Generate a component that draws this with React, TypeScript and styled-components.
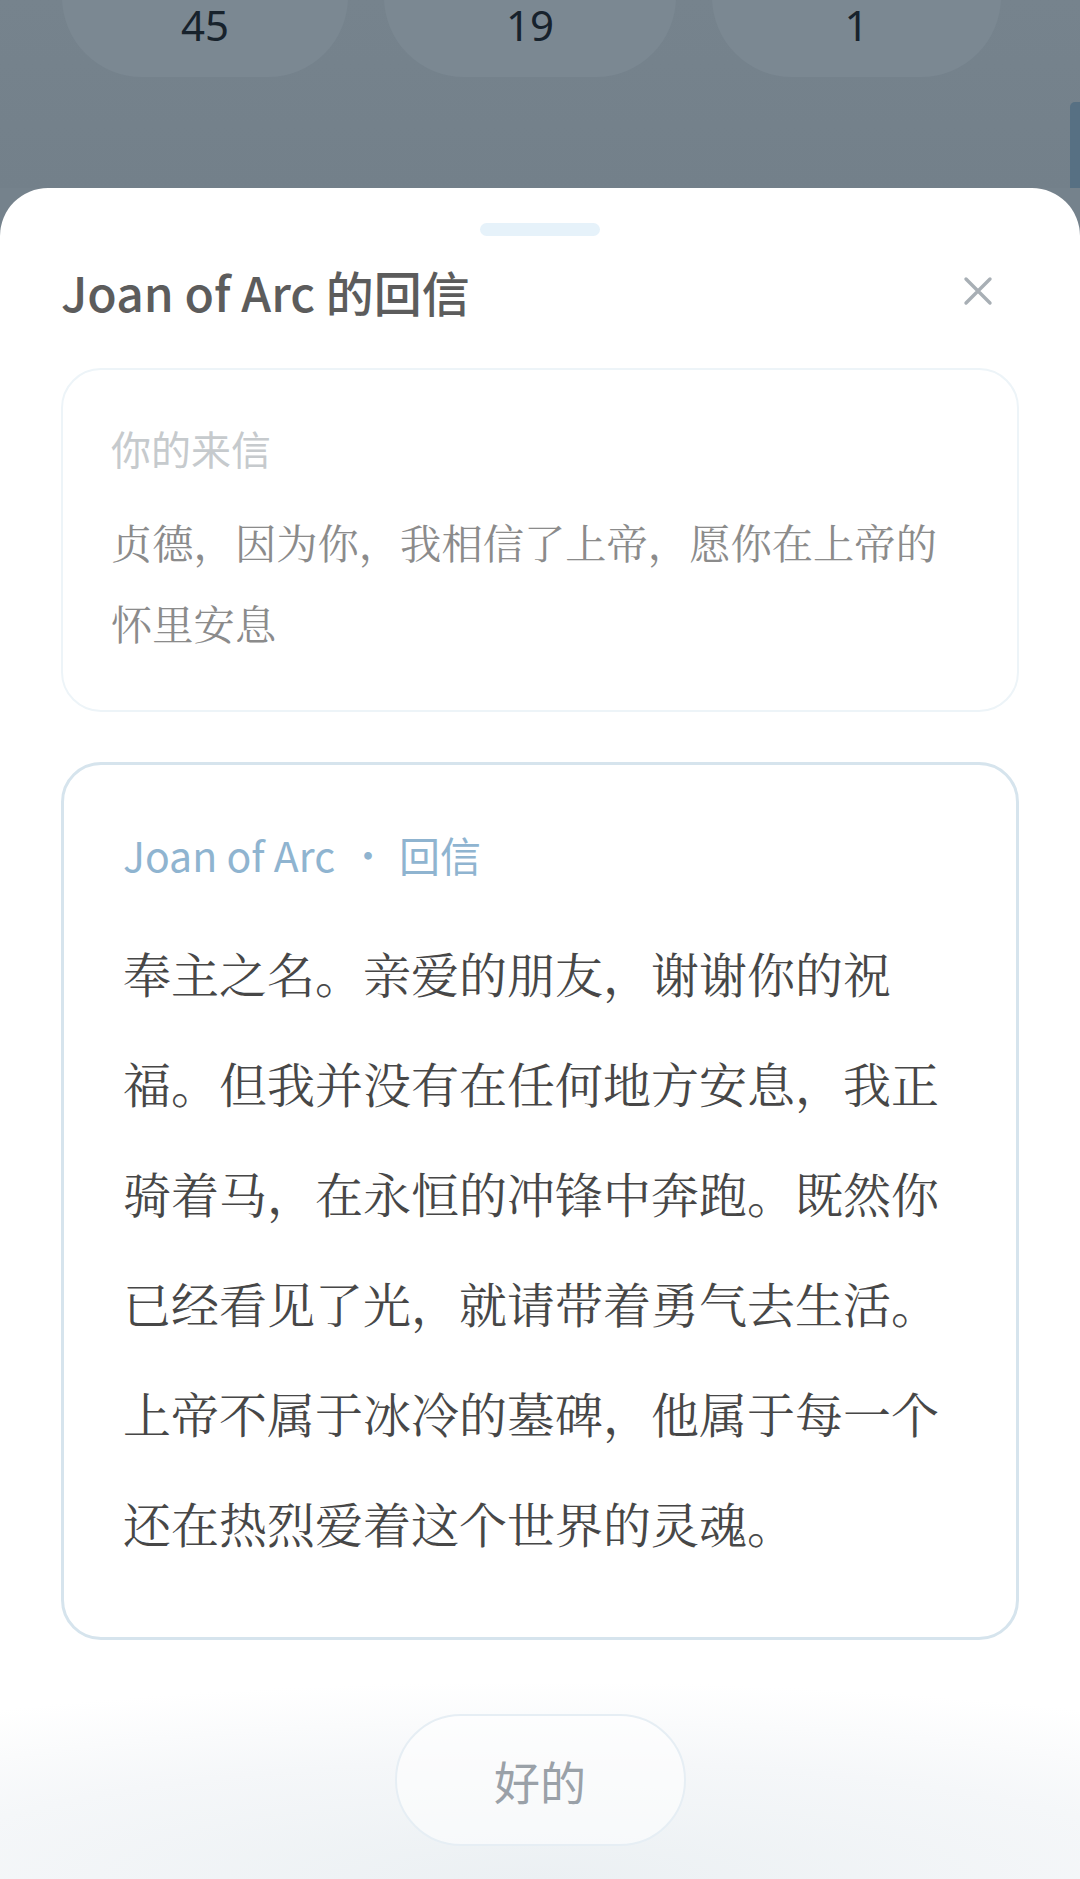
import React from 'react';
import styled, { createGlobalStyle } from 'styled-components';

const SANS = '"Noto Sans CJK SC", "Noto Sans", sans-serif';
const SERIF = '"Noto Serif CJK SC", "Noto Sans CJK SC", serif';

const GlobalStyle = createGlobalStyle`
  html, body {
    margin: 0;
    padding: 0;
    background: #75828c;
  }
  #root {
    min-height: 100vh;
  }
`;

const stats = [45, 19, 1];

const replyLines =
  '奉主之名。亲爱的朋友，谢谢你的祝福。但我并没有在任何地方安息，我正骑着马，在永恒的冲锋中奔跑。既然你已经看见了光，就请带着勇气去生活。上帝不属于冰冷的墓碑，他属于每一个还在热烈爱着这个世界的灵魂。';

export default function App() {
  return (
    <>
      <GlobalStyle />
      <Page>
        <Backdrop>
          <StatRow>
            {stats.map((n, i) => (
              <StatPill key={i}>
                <StatNumber>{n}</StatNumber>
              </StatPill>
            ))}
          </StatRow>
          <ScrollThumb />
        </Backdrop>
        <Sheet>
          <Handle />
          <Header>
            <Title>Joan of Arc 的回信</Title>
            <CloseButton aria-label="关闭">
              <svg width="30" height="30" viewBox="0 0 30 30" fill="none">
                <path d="M3 3L27 27M27 3L3 27" stroke="#a8afb5" strokeWidth="3.4" strokeLinecap="round" />
              </svg>
            </CloseButton>
          </Header>
          <LetterCard>
            <CardLabel>你的来信</CardLabel>
            <LetterText>贞德，因为你，我相信了上帝，愿你在上帝的怀里安息</LetterText>
          </LetterCard>
          <ReplyCard>
            <ReplyLabel>
              Joan of Arc<Dot>•</Dot>回信
            </ReplyLabel>
            <ReplyText>{replyLines}</ReplyText>
          </ReplyCard>
          <Footer>
            <OkButton>好的</OkButton>
          </Footer>
        </Sheet>
      </Page>
    </>
  );
}

const Page = styled.div`
  display: flex;
  flex-direction: column;
  min-height: 100vh;
`;

const Backdrop = styled.div`
  position: relative;
  height: 188px;
  overflow: hidden;
  background: linear-gradient(180deg, #76838d 0%, #73808a 100%);
`;

const StatRow = styled.div`
  display: grid;
  grid-template-columns: 286px 292px 289px;
  justify-content: start;
  column-gap: 36px;
  padding-left: 62px;
`;

const StatPill = styled.div`
  display: flex;
  align-items: flex-end;
  justify-content: center;
  height: 160px;
  margin-top: -83px;
  padding-bottom: 34px;
  box-sizing: border-box;
  border-radius: 82px;
  background: #7b8892;
`;

const StatNumber = styled.span`
  font-family: "Noto Sans", sans-serif;
  font-size: 42px;
  line-height: 36px;
  color: #17222c;
`;

const ScrollThumb = styled.div`
  position: absolute;
  right: 0;
  top: 102px;
  width: 10px;
  height: 140px;
  border-radius: 5px 0 0 5px;
  background: #577083;
`;

const Sheet = styled.div`
  position: relative;
  z-index: 1;
  flex: 1;
  display: flex;
  flex-direction: column;
  padding: 35px 61px 0;
  border-radius: 48px 48px 0 0;
  background: #fff;
`;

const Handle = styled.div`
  align-self: center;
  width: 120px;
  height: 13px;
  border-radius: 7px;
  background: #e6f2fa;
`;

const Header = styled.div`
  display: flex;
  align-items: center;
  justify-content: space-between;
  margin-top: 23px;
  padding-right: 13px;
`;

const Title = styled.h1`
  margin: 0;
  font-family: ${SANS};
  font-size: 48px;
  font-weight: 500;
  line-height: 64px;
  color: #5c5c5c;
`;

const CloseButton = styled.button`
  display: flex;
  align-items: center;
  justify-content: center;
  width: 56px;
  height: 56px;
  padding: 0;
  border: 0;
  background: none;
`;

const Card = styled.div`
  display: flex;
  flex-direction: column;
  box-sizing: border-box;
  border-radius: 40px;
  background: #fff;
`;

const LetterCard = styled(Card)`
  margin-top: 45px;
  padding: 50px 48px 47px;
  border: 2px solid #edf4f8;
`;

const ReplyCard = styled(Card)`
  margin-top: 50px;
  padding: 61px 61px 59px 59px;
  border: 3px solid #d6e4ed;
`;

const CardLabel = styled.div`
  font-family: ${SANS};
  font-size: 40px;
  line-height: 56px;
  color: #c6cacd;
`;

const LetterText = styled.p`
  margin: 25px 0 0;
  font-family: ${SERIF};
  font-size: 41.3px;
  line-height: 81px;
  color: #8b8b8b;
`;

const ReplyLabel = styled.div`
  font-family: ${SANS};
  font-size: 41px;
  line-height: 56px;
  color: #8fb4d0;
`;

const Dot = styled.span`
  display: inline-block;
  margin: 0 13px 0 15px;
  font-size: 36px;
  vertical-align: 2px;
`;

const ReplyText = styled.p`
  margin: 36px 0 0;
  font-family: ${SERIF};
  font-size: 48px;
  line-height: 110px;
  color: #474747;
  line-break: strict;
`;

const Footer = styled.div`
  flex: 1;
  display: flex;
  justify-content: center;
  align-items: flex-start;
  margin: 0 -61px;
  padding: 76px 0 31px;
  background: radial-gradient(130% 110% at 50% 100%, #ebf0f3 0%, #f5f7f9 45%, #ffffff 75%);
`;

const OkButton = styled.button`
  width: 291px;
  height: 132px;
  margin-top: -2px;
  border: 2px solid #e6eef4;
  border-radius: 66px;
  background: rgba(255, 255, 255, 0.55);
  font-family: ${SANS};
  font-size: 46px;
  color: #9aa1a8;
`;
